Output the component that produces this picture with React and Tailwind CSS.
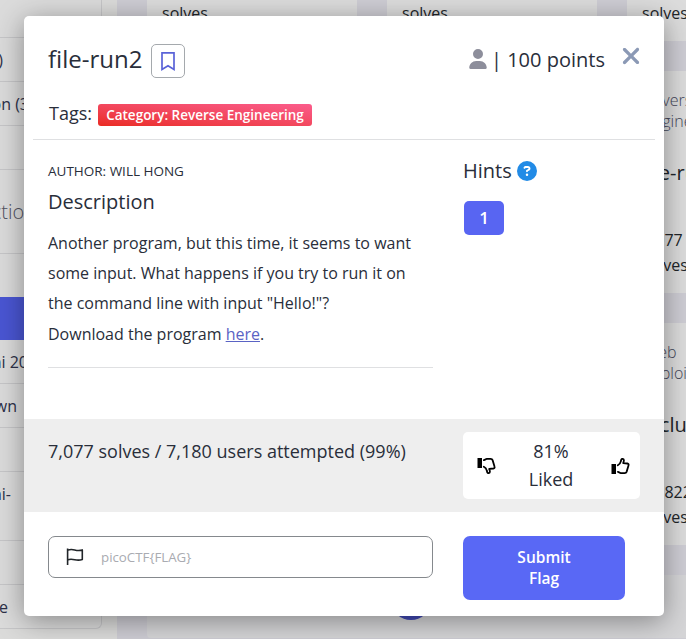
import { FaUser, FaXmark, FaCircleQuestion } from "react-icons/fa6";

function Row({ h, w, extra = "", children }) {
  return (
    <div className={`${h} ${extra} flex shrink-0 items-center border-b border-[#c6c6c8]`}>
      <div className={`${w} flex justify-end whitespace-nowrap`}>{children}</div>
    </div>
  );
}

function Sidebar() {
  return (
    <div className="flex h-[629px] w-[102px] shrink-0 flex-col overflow-hidden rounded-br-[6px] border-b border-r border-[#c6c6c8] bg-[#dbdbdb] text-[16px] text-[#2c3048]">
      <div className="h-[38px] shrink-0 border-b border-[#c6c6c8]" />
      <Row h="h-[44px]" w="w-[3px]">)</Row>
      <Row h="h-[44px]" w="w-[29px]">on (3</Row>
      <Row h="h-[44px]" w="w-[4px]" />
      <div className="flex h-[84px] shrink-0 items-center border-b border-[#c6c6c8] pt-px text-[20px] font-light text-[#50525f]">
        <div className="flex w-[36px] justify-end whitespace-nowrap">ction</div>
      </div>
      <div className="h-[43px] shrink-0" />
      <div className="h-[43px] shrink-0 bg-[#4a56d3]" />
      <Row h="h-[44px]" w="w-[28px]">ni 20</Row>
      <Row h="h-[44px]" w="w-[17px]">wn</Row>
      <Row h="h-[44px]" w="w-[4px]" />
      <Row h="h-[69px]" w="w-[11px]" extra="pb-[24px]">ni-</Row>
      <Row h="h-[44px]" w="w-[4px]" />
      <Row h="h-[44px]" w="w-[8px]">e</Row>
    </div>
  );
}

function Card({ cat, title, solves, footer }) {
  return (
    <div className="h-[222px] w-[210px] shrink-0 rounded-[4px] bg-[#dcdcdc] pl-[15px] pt-[19px] text-[#212529]">
      <div className="ml-[2px] h-[42px] whitespace-pre text-[16px] font-light leading-[21px] text-[#44475a]">{cat}</div>
      <div className="mt-[26px] h-[30px] text-[20px] leading-[30px]">{title}</div>
      <div className="mt-[40px] h-[25px] text-[16px] leading-[25px]">{solves}</div>
      <div className="text-[16px] leading-[25px]">{footer}</div>
    </div>
  );
}

function CardRow({ left, right }) {
  return (
    <div className="flex gap-[30px]">
      <Card {...left} />
      <Card {...left} />
      <Card {...right} />
    </div>
  );
}

function Backdrop() {
  return (
    <div className="flex h-[639px] w-[720px] bg-[#dbdbda]">
      <Sidebar />
      <div className="ml-[15px] w-[720px] shrink-0 bg-[#cecdd4] pl-[30px]">
        <div className="-mt-[181px] flex flex-col gap-[30px]">
          <CardRow left={{ footer: "solves" }} right={{ footer: "solves" }} />
          <CardRow right={{ cat: "Reverse\nEngineering", title: "file-run1", solves: "9,077", footer: "solves" }} />
          <CardRow right={{ cat: "Web\nExploitation", title: "Includes", solves: "19,822", footer: "solves" }} />
          <div className="flex h-[63px] rounded-[4px] bg-[#d5d5d7] pl-[244px] pt-[5px]">
            <div className="h-[40px] w-[40px] rounded-full bg-[#4149b4]" />
          </div>
        </div>
      </div>
    </div>
  );
}

function Bookmark() {
  return (
    <svg width="34" height="34" viewBox="0 0 34 34" fill="none" stroke="#5a63d8" strokeWidth="1.7">
      <path d="M11 8.800h12v16.700l-6-3.800-6 3.800z" />
    </svg>
  );
}

function Thumb({ className = "" }) {
  return (
    <svg className={className} width="19" height="18" viewBox="0 0 19 18" fill="none" stroke="#000" strokeWidth="1.8" strokeLinejoin="round" strokeLinecap="round">
      <path d="M0.500 7h4.500v10H.5z" fill="#000" stroke="none" />
      <path d="M6.800 8.300C8.400 7.500 9.400 6.300 9.700 4.700L10.300 2.600C10.800 1.300 12.900 1.700 12.900 3.200C12.900 4.200 12.500 5 12.200 6.100L16.400 6.500C17.500 6.700 17.900 7.500 17.500 8.500L15.700 14.600C15.300 15.800 14.800 16.100 13.600 16.100H9.800C8.600 16.100 8.300 15.100 6.900 14.800" />
    </svg>
  );
}

function Flag() {
  return (
    <svg width="18" height="18" viewBox="0 0 18 18" fill="none" stroke="#212529" strokeWidth="1.600" strokeLinejoin="round">
      <path d="M1.600.500v16.500M1.600 2.200C4.300 1 6 1.200 8.700 1.900s4.600.900 7.600 0v9.600c-3 1-5 .8-7.600.2s-4.400-1-7.100.2" />
    </svg>
  );
}

export default function App() {
  return (
    <div className="relative h-[639px] w-[686px] overflow-hidden font-['Open_Sans',sans-serif]">
      <Backdrop />
      <div className="absolute left-[24px] top-[16px] flex h-[600px] w-[640px] flex-col overflow-hidden rounded-[5px] bg-white text-[#292e3a] shadow-[0_5px_28px_rgba(0,0,0,0.38)]">
        <header className="mx-[9px] h-[124px] shrink-0 border-b border-[#dfe0e2] px-[15px] pt-[28px]">
          <div className="flex h-[34px]">
            <h1 className="w-[103px] shrink-0 whitespace-nowrap text-[24px] leading-[30px]">file-run2</h1>
            <button className="h-[34px] w-[34px] shrink-0 rounded-[5px] border border-[#a5a9ad]">
              <span className="-m-px block"><Bookmark /></span>
            </button>
            <div className="ml-[284px] flex w-[137px] shrink-0 whitespace-nowrap text-[20px] leading-[32px]">
              <FaUser className="mr-[4px] mt-[5px] h-[20px] w-[18px] shrink-0 text-[#8d8e9b]" />
              | 100 points
            </div>
            <FaXmark className="-mt-[1px] ml-[12px] h-[26px] w-[26px] shrink-0 text-[#8b99b5]" />
          </div>
          <div className="mt-[20px] flex items-center">
            <span className="w-[50px] pl-px text-[18px] leading-[30px]">Tags:</span>
            <span className="mt-[4px] h-[22px] w-[214px] whitespace-nowrap rounded-[3px] bg-linear-to-tr from-[#ea2a20] to-[#fb5c8c] text-center text-[13.500px] font-semibold leading-[22px] text-white">Category: Reverse Engineering</span>
          </div>
        </header>
        <main className="flex h-[279px] shrink-0 px-[24px]">
          <div className="mr-[30px] w-[385px] shrink-0">
            <div className="h-[228px] whitespace-nowrap border-b border-[#dfe0e2] pt-[20px]">
              <div className="text-[13.500px] leading-[22px]">AUTHOR: WILL HONG</div>
              <h2 className="mt-[4px] text-[20px] leading-[32px]">Description</h2>
              <p className="mt-[10px] text-[16px] leading-[30.200px]">
                Another program, but this time, it seems to want<br />some input. What happens if you try to run it on<br />the command line with input "Hello!"?<br />Download the program <a className="text-[#5a63c4] underline">here</a>.
              </p>
            </div>
          </div>
          <div>
            <div className="mt-[15px] flex items-center text-[20px] leading-[32px]">
              <span className="w-[54px]">Hints</span>
              <FaCircleQuestion className="h-[20px] w-[20px] text-[#228be6]" />
            </div>
            <div className="ml-px mt-[14px] h-[34px] w-[40px] rounded-[5px] bg-[#5865f2] text-center text-[17px] font-semibold leading-[34px] text-white">1</div>
          </div>
        </main>
        <section className="flex h-[93px] shrink-0 bg-[#eee] px-[24px] pt-[13px]">
          <div className="w-[415px] shrink-0 whitespace-nowrap pt-[4px] text-[18px] leading-[30px]">7,077 solves / 7,180 users attempted (99%)</div>
          <div className="flex h-[67px] w-[177px] rounded-[5px] bg-white pl-[14px]">
            <Thumb className="mt-[25px] -scale-y-100" />
            <div className="w-[110px] pt-[5px] text-center text-[18px] leading-[28px]">81%<br />Liked</div>
            <Thumb className="ml-[5px] mt-[25px]" />
          </div>
        </section>
        <footer className="flex items-start gap-[30px] px-[24px] pt-[24px]">
          <div className="flex h-[42px] w-[385px] items-center rounded-[7px] border border-[#85898d] pl-[17px] text-[13.300px] text-[#a9abb1]">
            <Flag />
            <span className="ml-[17px] mt-px">picoCTF&#123;FLAG&#125;</span>
          </div>
          <button className="h-[64px] w-[162px] rounded-[7px] bg-[#5968f5] text-[15.500px] font-semibold leading-[21px] text-white">Submit<br />Flag</button>
        </footer>
      </div>
    </div>
  );
}
